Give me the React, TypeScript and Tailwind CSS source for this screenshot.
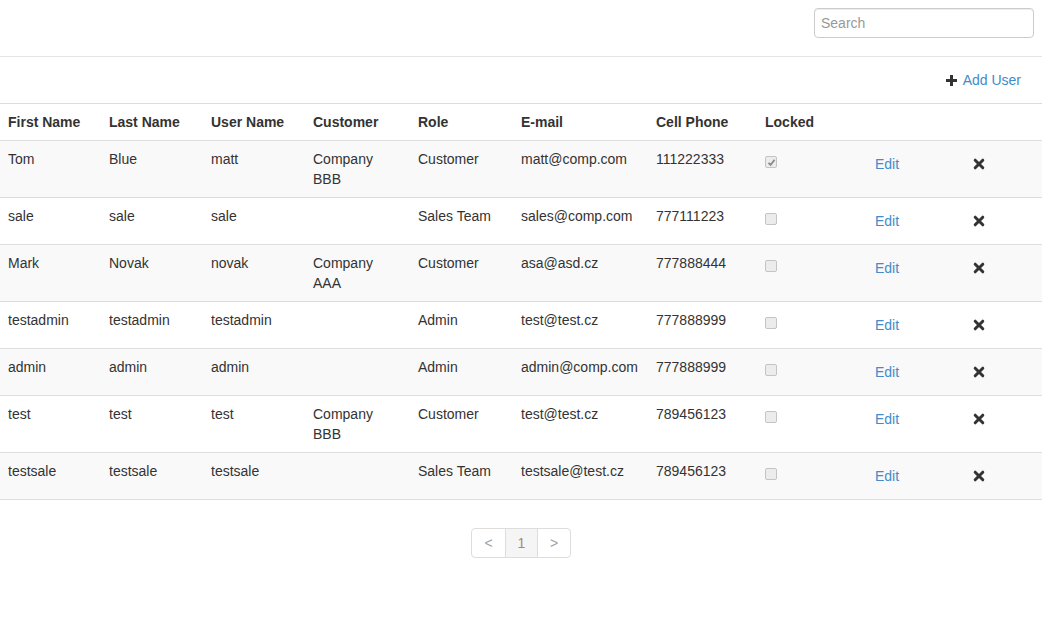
import React from "react";

type Row = {
  first: string;
  last: string;
  user: string;
  customer: string[];
  role: string;
  email: string;
  phone: string;
  locked: boolean;
};

const rows: Row[] = [
  { first: "Tom", last: "Blue", user: "matt", customer: ["Company", "BBB"], role: "Customer", email: "matt@comp.com", phone: "111222333", locked: true },
  { first: "sale", last: "sale", user: "sale", customer: [], role: "Sales Team", email: "sales@comp.com", phone: "777111223", locked: false },
  { first: "Mark", last: "Novak", user: "novak", customer: ["Company", "AAA"], role: "Customer", email: "asa@asd.cz", phone: "777888444", locked: false },
  { first: "testadmin", last: "testadmin", user: "testadmin", customer: [], role: "Admin", email: "test@test.cz", phone: "777888999", locked: false },
  { first: "admin", last: "admin", user: "admin", customer: [], role: "Admin", email: "admin@comp.com", phone: "777888999", locked: false },
  { first: "test", last: "test", user: "test", customer: ["Company", "BBB"], role: "Customer", email: "test@test.cz", phone: "789456123", locked: false },
  { first: "testsale", last: "testsale", user: "testsale", customer: [], role: "Sales Team", email: "testsale@test.cz", phone: "789456123", locked: false },
];

const cols = "grid grid-cols-[101px_102px_102px_105px_103px_135px_109px_98px_98px_1fr]";

function Cross() {
  return (
    <svg width="12" height="12" viewBox="0 0 12 12">
      <path d="M2.2 2.2 L9.8 9.8 M9.8 2.2 L2.2 9.8" stroke="#333" strokeWidth="3" strokeLinecap="round" />
    </svg>
  );
}

function Plus() {
  return (
    <svg width="11" height="11" viewBox="0 0 11 11">
      <path d="M4 0 H7 V4 H11 V7 H7 V11 H4 V7 H0 V4 H4 Z" fill="#333" />
    </svg>
  );
}

function Check({ checked }: { checked: boolean }) {
  return (
    <span className="inline-flex h-[12px] w-[12px] items-center justify-center rounded-[2px] border border-[#c4c4c4] bg-[#ececec] mt-[7px]">
      {checked && (
        <svg width="9" height="9" viewBox="0 0 9 9">
          <path d="M1.5 4.8 L3.6 6.8 L7.6 1.8" stroke="#8a8a8a" strokeWidth="1.8" fill="none" />
        </svg>
      )}
    </span>
  );
}

export default function App() {
  return (
    <div className="min-h-[633px] bg-white text-[14px] leading-5 text-[#333]" style={{ fontFamily: '"Liberation Sans", Arial, sans-serif' }}>
      <div className="flex h-[57px] justify-end border-b border-[#e5e5e5] pr-2 pt-2">
        <div className="flex h-[30px] w-[220px] items-center rounded-[4px] border border-[#ccc] px-[6px] text-[#999] shadow-[inset_0_1px_1px_rgba(0,0,0,0.075)]">
          Search
        </div>
      </div>
      <div className="flex h-[46px] items-center justify-end pr-[21px]">
        <span className="flex items-center gap-[6px]">
          <Plus />
          <span className="text-[#428bca]">Add User</span>
        </span>
      </div>
      <div className={`${cols} border-y border-[#ddd] font-bold`}>
        {["First Name", "Last Name", "User Name", "Customer", "Role", "E-mail", "Cell Phone", "Locked", "", ""].map((h, i) => (
          <div key={i} className="p-2 whitespace-nowrap">{h}</div>
        ))}
      </div>
      {rows.map((r, i) => (
        <div key={i} className={`${cols} border-b border-[#ddd] ${i % 2 === 0 ? "bg-[#f9f9f9]" : "bg-white"}`}>
          <div className="p-2">{r.first}</div>
          <div className="p-2">{r.last}</div>
          <div className="p-2">{r.user}</div>
          <div className="p-2">
            {r.customer.map((c, j) => (
              <div key={j}>{c}</div>
            ))}
          </div>
          <div className="p-2">{r.role}</div>
          <div className="p-2 whitespace-nowrap">{r.email}</div>
          <div className="p-2">{r.phone}</div>
          <div className="p-2 flex items-start">
            <Check checked={r.locked} />
          </div>
          <div className="p-2">
            <span className="inline-flex h-[30px] items-center px-3 text-[#428bca]">Edit</span>
          </div>
          <div className="p-2">
            <span className="inline-flex h-[30px] items-center px-3">
              <Cross />
            </span>
          </div>
        </div>
      ))}
      <div className="flex justify-center pt-[28px]">
        <div className="flex h-[30px] rounded-[4px] border border-[#ddd]">
          <span className="flex w-[33px] items-center justify-center text-[#9aa4ad]">&lt;</span>
          <span className="flex w-[33px] items-center justify-center border-x border-[#ddd] bg-[#f5f5f5] text-[#a08c72]">1</span>
          <span className="flex w-[32px] items-center justify-center text-[#9aa4ad]">&gt;</span>
        </div>
      </div>
    </div>
  );
}
